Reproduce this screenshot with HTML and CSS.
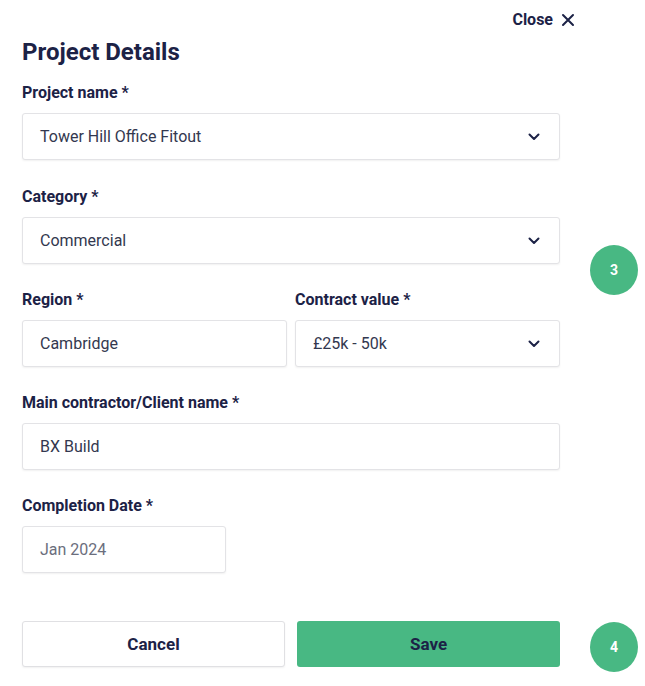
FILE: index.html
```html
<!DOCTYPE html>
<html lang="en">
<head>
<meta charset="utf-8">
<title>Project Details</title>
<link rel="stylesheet" href="styles.css">
</head>
<body>
<div class="panel">
  <div class="topbar">
    <button class="close">Close
      <svg width="14" height="14" viewBox="0 0 14 14"><path d="M2 2 L12 12 M12 2 L2 12" stroke="#1c2246" stroke-width="2" stroke-linecap="round" fill="none"/></svg>
    </button>
  </div>
  <h1 class="title">Project Details</h1>

  <div class="field">
    <label class="label">Project name *</label>
    <div class="input select"><span>Tower Hill Office Fitout</span><svg class="chev" width="12" height="8" viewBox="0 0 12 8"><path d="M1.5 1.5 L6 6 L10.5 1.5" stroke="#1c2246" stroke-width="2" fill="none" stroke-linecap="round" stroke-linejoin="round"/></svg></div>
  </div>

  <div class="field second">
    <label class="label">Category *</label>
    <div class="input select"><span>Commercial</span><svg class="chev" width="12" height="8" viewBox="0 0 12 8"><path d="M1.5 1.5 L6 6 L10.5 1.5" stroke="#1c2246" stroke-width="2" fill="none" stroke-linecap="round" stroke-linejoin="round"/></svg></div>
  </div>

  <div class="field row">
    <div class="col">
      <label class="label">Region *</label>
      <div class="input"><span>Cambridge</span></div>
    </div>
    <div class="col">
      <label class="label">Contract value *</label>
      <div class="input select"><span>£25k - 50k</span><svg class="chev" width="12" height="8" viewBox="0 0 12 8"><path d="M1.5 1.5 L6 6 L10.5 1.5" stroke="#1c2246" stroke-width="2" fill="none" stroke-linecap="round" stroke-linejoin="round"/></svg></div>
    </div>
  </div>

  <div class="field">
    <label class="label">Main contractor/Client name *</label>
    <div class="input"><span>BX Build</span></div>
  </div>

  <div class="field">
    <label class="label">Completion Date *</label>
    <div class="input date"><span class="muted">Jan 2024</span></div>
  </div>

  <div class="actions">
    <button class="btn cancel">Cancel</button>
    <button class="btn save">Save</button>
  </div>

  <div class="step step3">3</div>
  <div class="step step4">4</div>
</div>
</body>
</html>
```

FILE: styles.css
```css
* { box-sizing: border-box; }
html, body { margin: 0; padding: 0; background: #fff; }
body {
  font-family: Roboto, "Liberation Sans", sans-serif;
  color: #1c2246;
  width: 645px;
  height: 686px;
  overflow: hidden;
}
.panel {
  position: relative;
  padding: 10px 0 0 22px;
  width: 645px;
  height: 686px;
}
.topbar {
  width: 553px;
  display: flex;
  justify-content: flex-end;
  height: 20px;
}
.close {
  border: none;
  background: none;
  padding: 0;
  font-family: inherit;
  font-weight: 700;
  font-size: 16px;
  color: #1c2246;
  display: flex;
  align-items: center;
  gap: 8px;
  line-height: 20px;
}
.title {
  margin: 8px 0 0;
  font-size: 24px;
  line-height: 28px;
  font-weight: 700;
  color: #1c2246;
}
.field {
  width: 538px;
  margin-top: 17px;
}
.field + .field { margin-top: 26px; }
.field.second { margin-top: 27px; }
.label {
  display: block;
  font-size: 16px;
  line-height: 20px;
  font-weight: 700;
  margin-bottom: 10px;
}
.input {
  height: 47px;
  border: 1px solid #e3e3e6;
  border-radius: 3px;
  box-shadow: 0 1px 2px rgba(0,0,0,0.06);
  display: flex;
  align-items: center;
  justify-content: space-between;
  padding: 0 19px 0 17px;
  font-size: 16px;
  color: #33384f;
  background: #fff;
}
.muted { color: #6b6e7d; }
.chev { display: block; }
.row {
  display: grid;
  grid-template-columns: 265px 265px;
  column-gap: 8px;
}
.date { width: 204px; }
.actions {
  width: 538px;
  margin-top: 48px;
  display: grid;
  grid-template-columns: 263px 263px;
  column-gap: 12px;
}
.btn {
  height: 46px;
  border-radius: 3px;
  font-family: inherit;
  font-weight: 700;
  font-size: 17px;
  color: #1c2246;
}
.cancel {
  background: #fff;
  border: 1px solid #e0e0e3;
  box-shadow: 0 1px 2px rgba(0,0,0,0.06);
}
.save {
  background: #48b883;
  border: none;
}
.step {
  position: absolute;
  width: 48px;
  height: 50px;
  border-radius: 50%;
  background: #48b883;
  color: #fff;
  font-weight: 700;
  font-size: 14px;
  display: flex;
  align-items: center;
  justify-content: center;
}
.step3 { left: 590px; top: 245px; }
.step4 { left: 590px; top: 622px; }
```
